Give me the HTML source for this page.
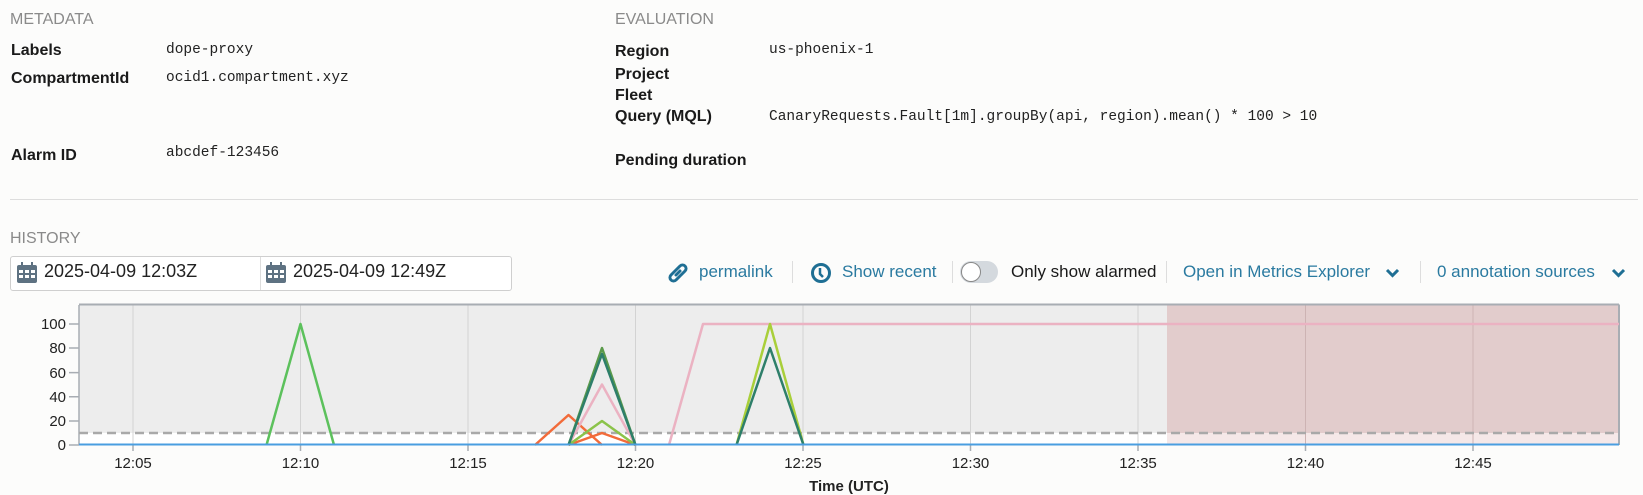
<!DOCTYPE html>
<html><head><meta charset="utf-8"><style>
body{margin:0;width:1643px;height:495px;background:#fcfcfb;font-family:"Liberation Sans",sans-serif;color:#222;position:relative;overflow:hidden}
.a{position:absolute;white-space:nowrap}
.h{font-size:16px;color:#8a8a8a}
.l{font-size:16px;color:#1a1a1a;font-weight:bold}
.v{font-family:"Liberation Mono",monospace;font-size:14.5px;color:#222}
.lk{font-size:17px;color:#2a7aa0}
.sep{position:absolute;width:1px;height:22px;background:#ddd;top:261px}
</style></head><body>
<div class="a h" style="left:10px;top:11px">METADATA</div>
<div class="a l" style="left:11px;top:42px">Labels</div>
<div class="a v" style="left:166px;top:42px">dope-proxy</div>
<div class="a l" style="left:11px;top:70px">CompartmentId</div>
<div class="a v" style="left:166px;top:70px">ocid1.compartment.xyz</div>
<div class="a l" style="left:11px;top:147px">Alarm ID</div>
<div class="a v" style="left:166px;top:145px">abcdef-123456</div>

<div class="a h" style="left:615px;top:11px">EVALUATION</div>
<div class="a l" style="left:615px;top:43px">Region</div>
<div class="a v" style="left:769px;top:42px">us-phoenix-1</div>
<div class="a l" style="left:615px;top:66px">Project</div>
<div class="a l" style="left:615px;top:87px">Fleet</div>
<div class="a l" style="left:615px;top:108px">Query (MQL)</div>
<div class="a v" style="left:769px;top:109px">CanaryRequests.Fault[1m].groupBy(api, region).mean() * 100 &gt; 10</div>
<div class="a l" style="left:615px;top:152px">Pending duration</div>

<div class="a" style="left:10px;top:199px;width:1628px;height:1px;background:#ddd"></div>
<div class="a h" style="left:10px;top:230px">HISTORY</div>

<div class="a" style="left:10px;top:256px;width:500px;height:33px;border:1px solid #cfcfcf;border-radius:3px;background:#fff"></div>
<div class="a" style="left:260px;top:257px;width:1px;height:33px;background:#ddd"></div>
<svg class="a" style="left:16px;top:262px" width="22" height="22" viewBox="0 0 22 22"><rect x="1" y="3" width="20" height="18" rx="2" fill="#5e7282"/><rect x="5" y="0" width="2" height="5" fill="#5e7282"/><rect x="15" y="0" width="2" height="5" fill="#5e7282"/><g fill="#fff"><rect x="3" y="8" width="4" height="3"/><rect x="9" y="8" width="4" height="3"/><rect x="15" y="8" width="4" height="3"/><rect x="3" y="13" width="4" height="3"/><rect x="9" y="13" width="4" height="3"/><rect x="15" y="13" width="4" height="3"/></g></svg>
<div class="a" style="left:44px;top:261px;font-size:18px">2025-04-09 12:03Z</div>
<svg class="a" style="left:265px;top:262px" width="22" height="22" viewBox="0 0 22 22"><rect x="1" y="3" width="20" height="18" rx="2" fill="#5e7282"/><rect x="5" y="0" width="2" height="5" fill="#5e7282"/><rect x="15" y="0" width="2" height="5" fill="#5e7282"/><g fill="#fff"><rect x="3" y="8" width="4" height="3"/><rect x="9" y="8" width="4" height="3"/><rect x="15" y="8" width="4" height="3"/><rect x="3" y="13" width="4" height="3"/><rect x="9" y="13" width="4" height="3"/><rect x="15" y="13" width="4" height="3"/></g></svg>
<div class="a" style="left:293px;top:261px;font-size:18px">2025-04-09 12:49Z</div>

<svg class="a" style="left:666px;top:261px" width="24" height="24" viewBox="0 0 24 24" fill="none" stroke="#1f6f94" stroke-width="3" stroke-linecap="round"><path d="M10 14l4-4"/><path d="M9 10l-4 4a3.5 3.5 0 0 0 5 5l4-4"/><path d="M15 14l4-4a3.5 3.5 0 0 0-5-5l-4 4"/></svg>
<div class="a lk" style="left:699px;top:262px">permalink</div>
<div class="sep" style="left:792px"></div>
<svg class="a" style="left:810px;top:262px" width="22" height="22" viewBox="0 0 22 22" fill="none" stroke="#1f6f94" stroke-width="3"><circle cx="11" cy="11" r="8.5"/><path d="M10 6v6l3 3" stroke-width="2.5"/></svg>
<div class="a lk" style="left:842px;top:262px">Show recent</div>
<div class="sep" style="left:952px"></div>
<div class="a" style="left:960px;top:261px;width:38px;height:22px;border-radius:11px;background:#d4d9de"></div>
<div class="a" style="left:961px;top:262px;width:18px;height:18px;border-radius:50%;background:#fff;border:1px solid #888"></div>
<div class="a" style="left:1011px;top:262px;font-size:17px;color:#1a1a1a">Only show alarmed</div>
<div class="sep" style="left:1166px"></div>
<div class="a lk" style="left:1183px;top:262px">Open in Metrics Explorer</div>
<svg class="a" style="left:1385px;top:268px" width="15" height="10" viewBox="0 0 15 10"><path d="M2 2l5.5 5.5L13 2" stroke="#1f6f94" stroke-width="3" fill="none"/></svg>
<div class="sep" style="left:1420px"></div>
<div class="a lk" style="left:1437px;top:262px">0 annotation sources</div>
<svg class="a" style="left:1611px;top:268px" width="15" height="10" viewBox="0 0 15 10"><path d="M2 2l5.5 5.5L13 2" stroke="#1f6f94" stroke-width="3" fill="none"/></svg>

<svg class="a" style="left:0;top:0" width="1643" height="495" viewBox="0 0 1643 495">
<rect x="79" y="305" width="1088" height="140" fill="#ededed"/>
<rect x="1167" y="305" width="452" height="140" fill="#e2cccc"/>
<rect x="79" y="433" width="1088" height="12" fill="#fff"/>
<rect x="1167" y="433" width="452" height="12" fill="#f5e8e8"/>
<g stroke="#d3d3d3" stroke-width="1">
<path d="M133 305V445M300.5 305V445M468 305V445M635.5 305V445M803 305V445M970.5 305V445M1138 305V445"/>
</g>
<g stroke="#cdb3b3"><path d="M1305.5 305V445M1473 305V445"/></g>
<path d="M79 304.5H1619M1619 304.5V445" stroke="#a8adb3" stroke-width="2" fill="none"/>
<path d="M79 305V445" stroke="#a8adb3" stroke-width="1.5"/>
<g stroke="#a8adb3" stroke-width="1.5"><path d="M69 324H79M69 348H79M69 372.6H79M69 396.8H79M69 421H79M69 445H79"/><path d="M133 445v6M300.5 445v6M468 445v6M635.5 445v6M803 445v6M970.5 445v6M1138 445v6M1305.5 445v6M1473 445v6"/></g>
<path d="M79 433H1619" stroke="#a9a9a9" stroke-width="2.5" stroke-dasharray="9,5"/>
<g fill="none" stroke-width="2.5" stroke-linejoin="round">
<path d="M266.5 445L300.5 324L334 445" stroke="#5cc15c"/>
<path d="M535 445L568.5 415L602 445" stroke="#f26b3a"/>
<path d="M568.5 445L602 433L635.5 445" stroke="#f26b3a"/>
<path d="M568.5 445L602 384.5L635.5 445" stroke="#ebb2c2"/>
<path d="M568.5 445L602 421L635.5 445" stroke="#8bc34a"/>
<path d="M568.5 445L602 348L635.5 445" stroke="#5a9a4a"/>
<path d="M568.5 445L602 354L635.5 445" stroke="#2e7f6a"/>
<path d="M669 445L703 324H1619" stroke="#ebb2c2"/>
<path d="M736.5 445L770 324L803.5 445" stroke="#a9cf3a"/>
<path d="M736.5 445L770 348L803.5 445" stroke="#2e7f6a"/>
</g>
<path d="M79 444.5H1619" stroke="#4a9ee0" stroke-width="2"/>
<g font-family="Liberation Sans" font-size="15" fill="#222" text-anchor="end">
<text x="66" y="329">100</text><text x="66" y="353">80</text><text x="66" y="378">60</text><text x="66" y="402">40</text><text x="66" y="426">20</text><text x="66" y="450">0</text>
</g>
<g font-family="Liberation Sans" font-size="15" fill="#222" text-anchor="middle">
<text x="133" y="468">12:05</text><text x="300.5" y="468">12:10</text><text x="468" y="468">12:15</text><text x="635.5" y="468">12:20</text><text x="803" y="468">12:25</text><text x="970.5" y="468">12:30</text><text x="1138" y="468">12:35</text><text x="1305.5" y="468">12:40</text><text x="1473" y="468">12:45</text>
<text x="849" y="491" font-weight="bold">Time (UTC)</text>
</g>
</svg>
</body></html>
